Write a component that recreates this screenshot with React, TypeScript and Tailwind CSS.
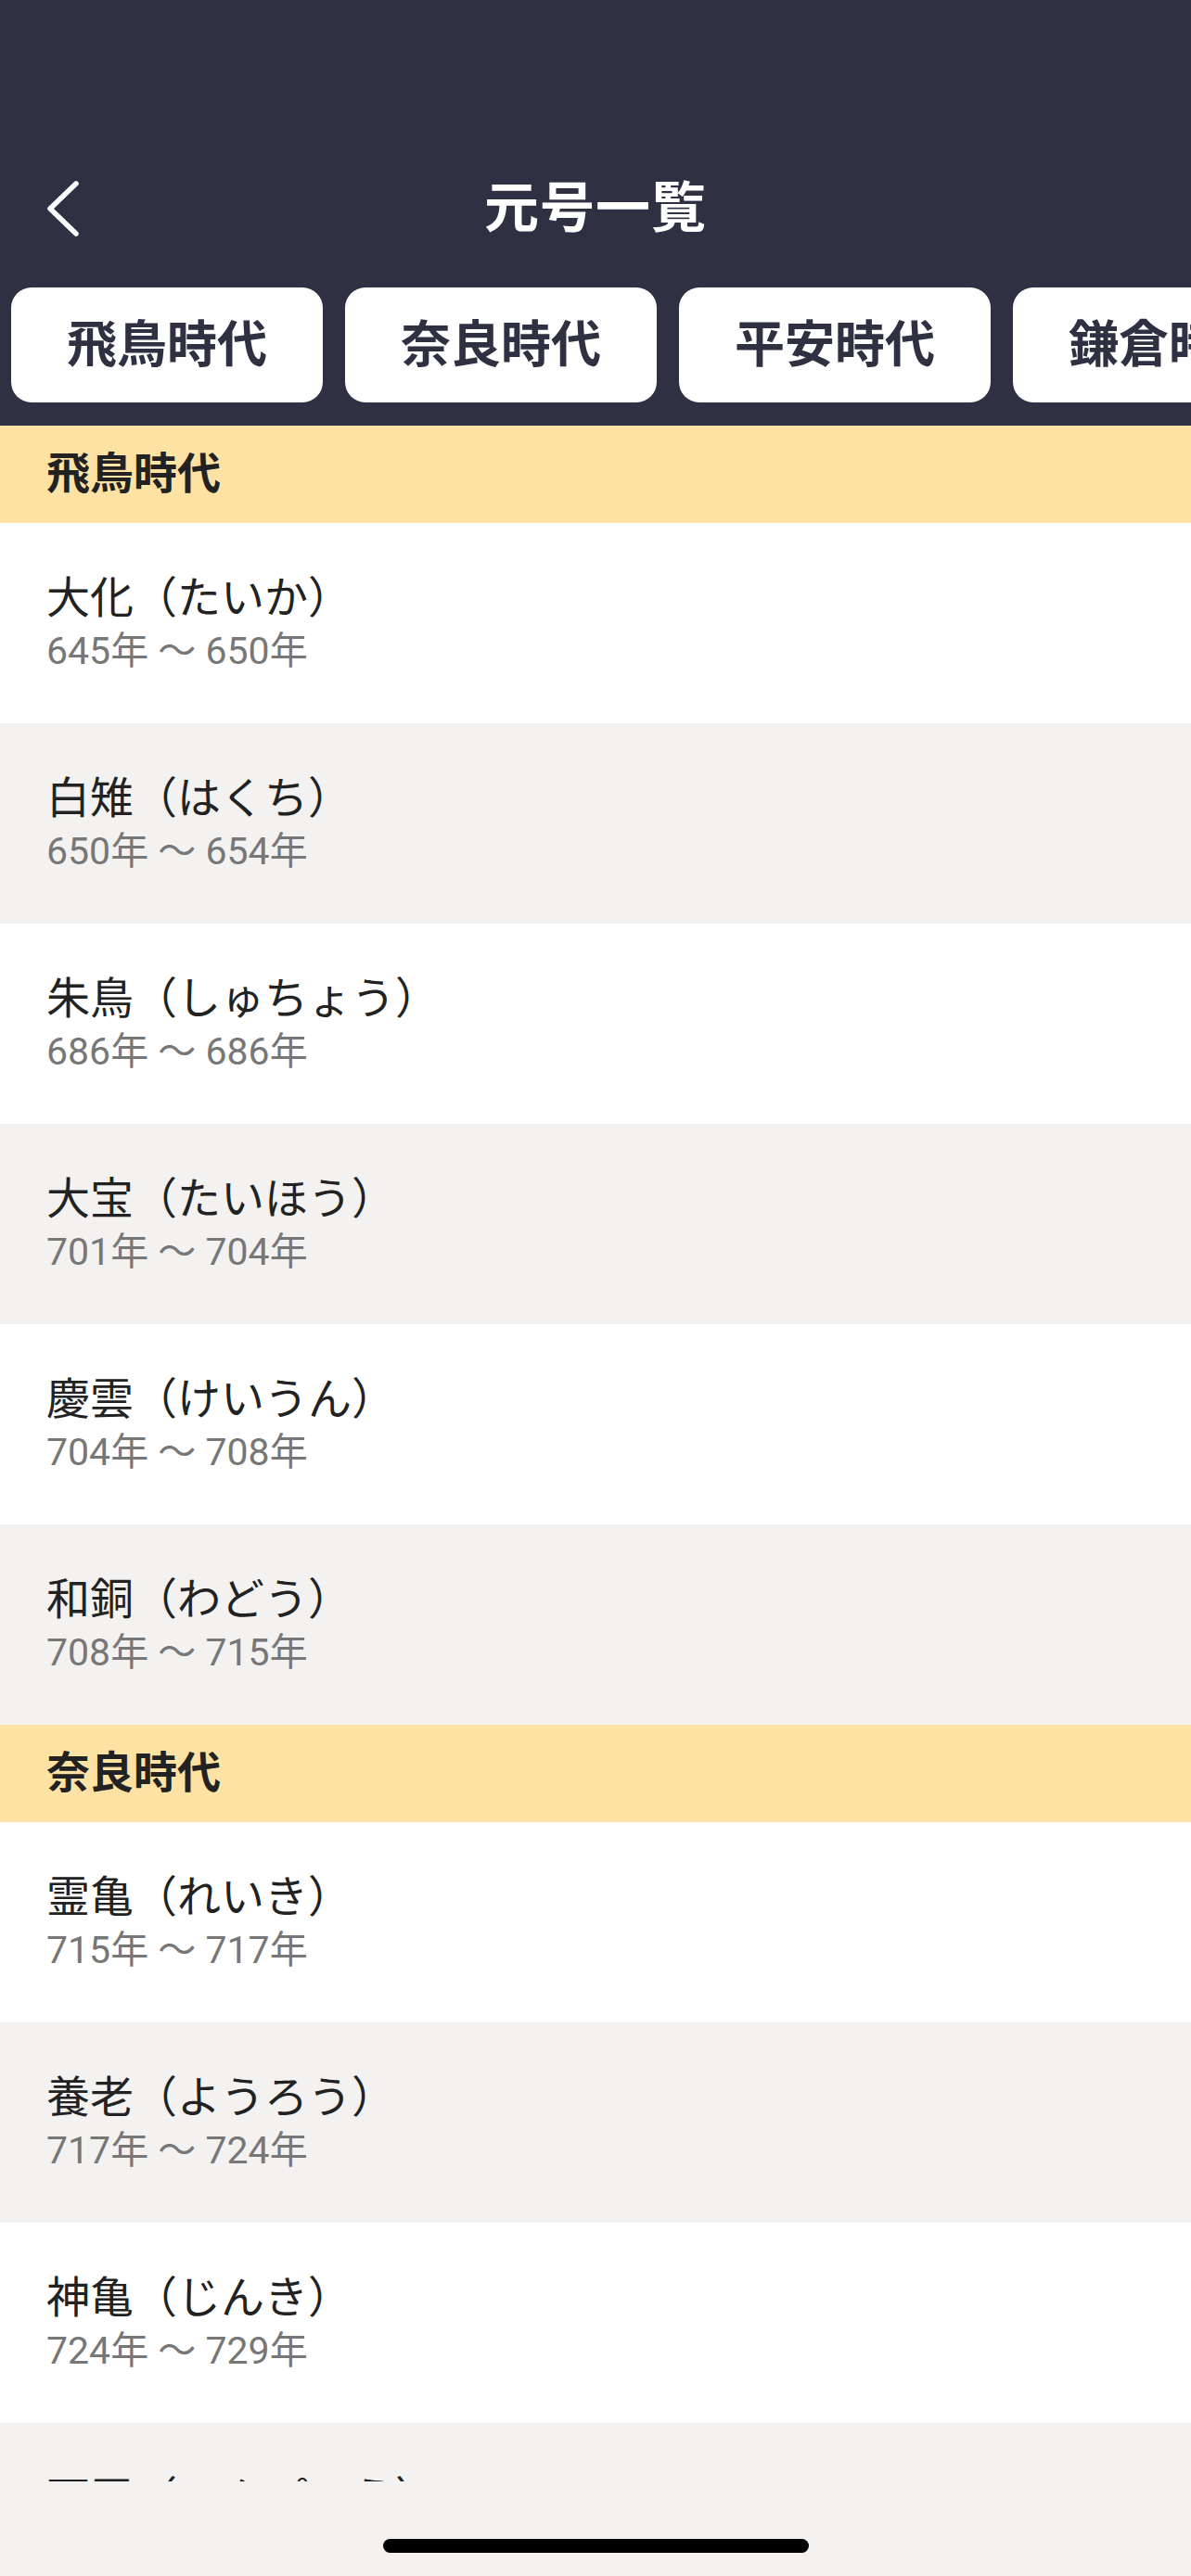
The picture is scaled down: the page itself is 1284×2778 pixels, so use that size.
import React from "react";

type Era = { name: string; kana: string; from: number; to: number };
type Period = { title: string; eras: Era[] };

const periods: Period[] = [
  {
    title: "飛鳥時代",
    eras: [
      { name: "大化", kana: "たいか", from: 645, to: 650 },
      { name: "白雉", kana: "はくち", from: 650, to: 654 },
      { name: "朱鳥", kana: "しゅちょう", from: 686, to: 686 },
      { name: "大宝", kana: "たいほう", from: 701, to: 704 },
      { name: "慶雲", kana: "けいうん", from: 704, to: 708 },
      { name: "和銅", kana: "わどう", from: 708, to: 715 },
    ],
  },
  {
    title: "奈良時代",
    eras: [
      { name: "霊亀", kana: "れいき", from: 715, to: 717 },
      { name: "養老", kana: "ようろう", from: 717, to: 724 },
      { name: "神亀", kana: "じんき", from: 724, to: 729 },
      { name: "天平", kana: "てんぴょう", from: 729, to: 749 },
    ],
  },
];

const tabs = ["飛鳥時代", "奈良時代", "平安時代", "鎌倉時代"];

const font = { fontFamily: 'Roboto, "Noto Sans CJK JP", sans-serif' };

export default function App() {
  return (
    <div className="flex h-[2778px] w-[1284px] flex-col overflow-hidden bg-[#f3f2f1]" style={font}>
      {/* Header */}
      <div className="shrink-0 bg-[#2f3142] pt-[168px] pb-[25px]">
        <div className="relative flex h-[114px] items-center justify-center">
          <button className="absolute left-[40px] top-[26px] flex h-[62px] w-[52px] items-center justify-center">
            <svg width="44" height="62" viewBox="0 0 44 62" fill="none">
              <polyline points="38,4 10,31 38,58" stroke="white" strokeWidth="5.5" strokeLinecap="round" strokeLinejoin="round" />
            </svg>
          </button>
          <h1 className="text-[59px] font-bold tracking-[1px] text-white">元号一覧</h1>
        </div>
        <div className="mt-[28px] flex gap-[24px] overflow-hidden pl-[12px]">
          {tabs.map((t) => (
            <div
              key={t}
              className="flex h-[124px] w-[336px] shrink-0 items-center justify-center rounded-[22px] bg-white text-[54px] font-bold text-[#2f3142]"
            >
              {t}
            </div>
          ))}
        </div>
      </div>

      {/* List */}
      <div className="min-h-0 flex-1 overflow-hidden">
        {periods.map((p) => (
          <div key={p.title}>
            <div className="flex h-[105px] items-center bg-[#fee2a4] pl-[50px] text-[47px] font-bold text-[#222]">
              {p.title}
            </div>
            {p.eras.map((e, i) => (
              <div
                key={e.name}
                className={
                  "flex h-[216px] flex-col justify-center pl-[50px] " +
                  (i % 2 === 0 ? "bg-white" : "bg-[#f3f2f1]")
                }
              >
                <div className="text-[47px] leading-[60px] text-[#222]">
                  {e.name}（{e.kana}）
                </div>
                <div className="text-[41px] leading-[54px] text-[#777]">
                  {e.from}年 〜 {e.to}年
                </div>
              </div>
            ))}
          </div>
        ))}
      </div>

      {/* Home indicator area */}
      <div className="flex h-[102px] shrink-0 items-start justify-center bg-[#f3f2f1] pt-[62px]">
        <div className="h-[15px] w-[459px] rounded-full bg-black" />
      </div>
    </div>
  );
}
